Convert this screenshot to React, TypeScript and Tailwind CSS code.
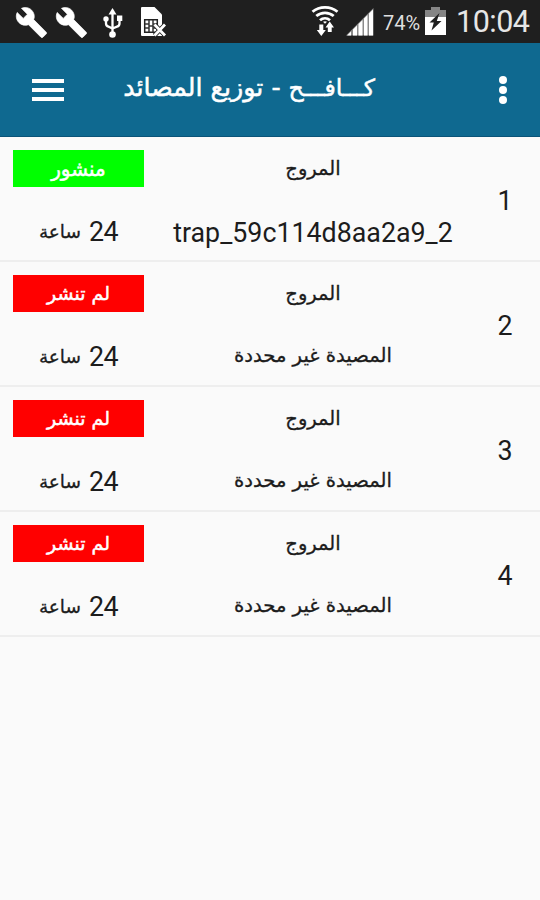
const arabic = "font-['DejaVu_Sans',sans-serif]";
const latin = "font-['Roboto',sans-serif]";

const traps = [
  { id: 1, published: true, place: "المروج", trap: "trap_59c114d8aa2a9_2" },
  { id: 2, published: false, place: "المروج", trap: null },
  { id: 3, published: false, place: "المروج", trap: null },
  { id: 4, published: false, place: "المروج", trap: null },
];

function WrenchIcon() {
  return (
    <svg width="33" height="33" viewBox="0 0 24 24" fill="#fff" stroke="#fff" strokeWidth="0.5">
      <path d="M22.700 19l-9.100-9.100c.9-2.300.4-5-1.500-6.900-2-2-5-2.400-7.400-1.300L9 6 6 9 1.600 4.700C.4 7.100.9 10.100 2.900 12.100c1.900 1.900 4.600 2.400 6.900 1.500l9.100 9.100c.4.4 1 .4 1.400 0l2.300-2.300c.5-.4.5-1.100.1-1.400z" />
    </svg>
  );
}

function UsbIcon() {
  return (
    <svg width="22" height="32" viewBox="0 0 22 32" fill="none" stroke="#fff" strokeWidth="2.300">
      <path d="M10.500 5v21M4 12v4.500q0 2.500 2.500 3.200l4 1.800M17.500 11v5.500q0 2.500-2.500 3.200l-4.500 1.800" />
      <g fill="#fff" stroke="none">
        <path d="M10.500 1l4 6.500h-8z" />
        <circle cx="4" cy="12" r="2.700" />
        <path d="M15 8.500h5.300v5.500H15z" />
        <circle cx="10.500" cy="27.500" r="3.300" />
      </g>
    </svg>
  );
}

function SimIcon() {
  return (
    <svg width="27" height="32" viewBox="0 0 27 32">
      <path d="M1 2q0-1 1-1h12.500l7.500 7.500V30H2q-1 0-1-1z" fill="#fff" />
      <path d="M4.700 13.700h12.600v12.600H4.700z" stroke="#222" strokeWidth="1.500" fill="none" />
      <path d="M5 18h4M5 22h4M9 14v12M13 14v12M13 18h4M9 20h4M13 22h4" stroke="#333" strokeWidth="1.500" fill="none" />
      <path d="M14.500 18.500l10.500 11M25 18.500l-10.500 11" stroke="#1f1f1f" strokeWidth="4.600" />
      <path d="M14.500 18.500l10.500 11M25 18.500l-10.500 11" stroke="#fff" strokeWidth="2.800" />
    </svg>
  );
}

function WifiIcon() {
  return (
    <svg width="28" height="32" viewBox="0 0 28 32" fill="none">
      <g stroke="#fff" strokeWidth="2.800">
        <path d="M1.500 6.800C8.500 .8 19.500 .8 26.500 6.800" />
        <path d="M5.300 11c5-4.300 12.400-4.300 17.400 0" />
        <path d="M9 15.200c2.900-2.500 7.100-2.500 10 0" />
      </g>
      <path d="M12 16.800q2-1 4 0l-2 2z" fill="#fff" />
      <path d="M8.300 19.500h4v5.500h2.500l-4.500 6-4.500-6h2.500z" fill="#fff" />
      <path d="M16.800 27v-4.500h-2.300L18.700 16.500l4.300 6h-2.300V27z" fill="#fff" />
    </svg>
  );
}

function SignalIcon() {
  return (
    <svg width="28" height="28" viewBox="0 0 28 28">
      <path d="M0 27.500L27.500 0v27.500z" fill="#8a8a8a" />
      <path d="M1 27.500l4-4v4zM7 27.500v-6l4-4v10zM12.500 27.500V16l4-4v15.500zM18 27.500V10.500l3.500-3.500v20.500zM23 27.500V5.500L27 1.500v26z" fill="#fff" />
    </svg>
  );
}

function BatteryIcon() {
  return (
    <svg width="21" height="28" viewBox="0 0 21 28">
      <path d="M6 0h9v3h6v8H0V3h6z" fill="#858585" />
      <path d="M0 10h21v18H0z" fill="#fff" />
      <path d="M14.500 6L4.500 15.500h4.300L6.500 23.500l10-9.500h-4.700z" fill="#1f1f1f" />
    </svg>
  );
}

function StatusBar() {
  return (
    <div className="flex h-[43px] items-start bg-[#1f1f1f] text-white">
      <div className="mt-[6px] ml-[15px] flex gap-[7px]">
        <WrenchIcon />
        <WrenchIcon />
      </div>
      <div className="mt-[7px] ml-[14px]">
        <UsbIcon />
      </div>
      <div className="mt-[6px] ml-[16px]">
        <SimIcon />
      </div>
      <div className="mt-[5px] ml-auto">
        <WifiIcon />
      </div>
      <div className="mt-[8px] ml-[7px]">
        <SignalIcon />
      </div>
      <span className={`${latin} mt-[8px] ml-[9px] w-[37px] text-[20px] leading-[30px] whitespace-nowrap text-[#dedede]`}>
        74%
      </span>
      <div className="mt-[7px] ml-[5px]">
        <BatteryIcon />
      </div>
      <span className={`${latin} mt-[4px] mr-[10px] ml-[10px] w-[74px] text-[30.500px] leading-[36px] tracking-[-0.5px] whitespace-nowrap text-[#e6e6e6]`}>
        10:04
      </span>
    </div>
  );
}

function AppBar() {
  return (
    <header className="flex h-[94px] items-start border-b border-[#0b5479] bg-[#0f6990] text-white">
      <div className="mt-[36px] ml-[32px] flex w-[32px] flex-col gap-[5px]">
        <div className="h-[4px] bg-white" />
        <div className="h-[4px] bg-white" />
        <div className="h-[4px] bg-white" />
      </div>
      <h1
        dir="rtl"
        className={`${arabic} mt-[27px] ml-[57px] w-[254px] text-[25.300px] leading-[36px] whitespace-nowrap [-webkit-text-stroke:0.5px_white]`}
      >
        <span className="text-[23.600px]">كـــافـــح</span> - توزيع المصائد
      </h1>
      <div className="mt-[33px] mr-[33px] ml-auto flex flex-col gap-[2px]">
        <div className="size-[8px] rounded-full bg-white" />
        <div className="size-[8px] rounded-full bg-white" />
        <div className="size-[8px] rounded-full bg-white" />
      </div>
    </header>
  );
}

export default function App() {
  return (
    <div className="flex h-[900px] w-[540px] flex-col overflow-hidden bg-[#fafafa] text-[#1c1c1c]">
      <StatusBar />
      <AppBar />
      <main>
        {traps.map((t) => (
          <div key={t.id} className="flex h-[125px] border-b-2 border-[#eeeeee]">
            <div className="ml-[13px] w-[131px] pt-[13px]">
              <div
                dir="rtl"
                className={`${arabic} flex h-[37px] items-center justify-center text-white [-webkit-text-stroke:0.5px_white] ${
                  t.published ? "bg-[#00ff00] text-[20px]" : "bg-[#ff0000] text-[19px]"
                }`}
              >
                {t.published ? "منشور" : "لم تنشر"}
              </div>
              <div dir="rtl" className="mt-[27px] flex items-center justify-center gap-[8px] leading-[36px]">
                <span className={`${latin} text-[26.800px] tracking-[-0.5px]`}>24</span>
                <span className={`${arabic} text-[18.500px] [-webkit-text-stroke:0.3px_#1c1c1c]`}>ساعة</span>
              </div>
            </div>
            <div className="ml-[24px] w-[290px] pt-[13px] text-center whitespace-nowrap">
              <div dir="rtl" className={`${arabic} text-[19.500px] leading-[37px] [-webkit-text-stroke:0.3px_#1c1c1c]`}>
                {t.place}
              </div>
              {t.trap ? (
                <div className={`${latin} mt-[28px] text-[26.800px] leading-[36px]`}>{t.trap}</div>
              ) : (
                <div
                  dir="rtl"
                  className={`${arabic} mt-[26px] text-[19.600px] leading-[36px] [-webkit-text-stroke:0.3px_#1c1c1c]`}
                >
                  المصيدة غير محددة
                </div>
              )}
            </div>
            <div className={`${latin} ml-[27px] w-[40px] pt-[46px] text-center text-[26.800px] leading-[36px]`}>{t.id}</div>
          </div>
        ))}
      </main>
    </div>
  );
}
